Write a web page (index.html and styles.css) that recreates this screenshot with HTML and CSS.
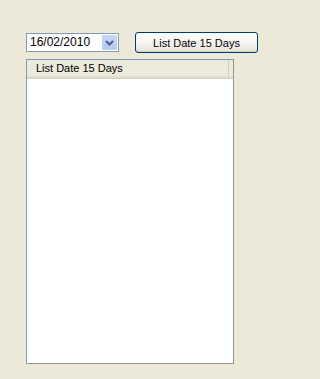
FILE: index.html
```html
<!DOCTYPE html>
<html>
<head>
<meta charset="utf-8">
<link rel="stylesheet" href="styles.css">
</head>
<body>
<div class="page">
  <div class="toolbar">
    <div class="combo">
      <span class="combo-text">16/02/2010</span>
      <span class="combo-btn">
        <svg width="9" height="6" viewBox="0 0 9 6"><path d="M1 1 L4.5 4.5 L8 1" fill="none" stroke="#4d6185" stroke-width="2"/></svg>
      </span>
    </div>
    <button class="btn">List Date 15 Days</button>
  </div>
  <div class="listview">
    <div class="header">
      <div class="col">List Date 15 Days</div>
      <div class="col-rest"></div>
    </div>
  </div>
</div>
</body>
</html>
```
FILE: styles.css
```css
html, body {
  margin: 0;
  padding: 0;
  background: #ece9d8;
}
.page {
  width: 264px;
  height: 379px;
  padding: 32px 0 0 26px;
  box-sizing: border-box;
  font-family: "Liberation Sans", Arial, sans-serif;
  font-size: 11px;
  color: #000;
}
.toolbar {
  display: flex;
  align-items: flex-start;
  gap: 16px;
}
.combo {
  width: 93px;
  height: 19px;
  box-sizing: border-box;
  border: 1px solid #7f9db9;
  background: #fff;
  display: flex;
  align-items: center;
  margin-top: 1px;
}
.combo-text {
  flex: 1;
  padding-left: 3px;
  line-height: 17px;
  font-size: 12px;
}
.combo-btn {
  width: 15px;
  height: 15px;
  margin-right: 1px;
  background: linear-gradient(#c6d5fc, #b4c7f6);
  border: 1px solid #c5d3f7;
  box-sizing: border-box;
  border-radius: 1px;
  display: flex;
  align-items: center;
  justify-content: center;
}
.btn {
  width: 123px;
  height: 21px;
  border: 1px solid #003c74;
  border-radius: 3px;
  background: linear-gradient(#ffffff 0%, #f4f3ee 60%, #e3e1d5 100%);
  font-family: "Liberation Sans", Arial, sans-serif;
  font-size: 11px;
  color: #000;
  padding: 0;
  box-shadow: inset 0 -1px 0 #d6d0c5;
}
.listview {
  margin-top: 6px;
  width: 208px;
  height: 305px;
  box-sizing: border-box;
  border: 1px solid #7f9db9;
  border-bottom-color: #8e9498;
  border-right-color: #8e9498;
  background: #fff;
}
.header {
  display: flex;
  height: 18px;
  background: #ebeadb;
  border-bottom: 1px solid #d6d2c2;
  box-shadow: inset 0 -2px 0 #e2decd;
}
.col {
  width: 202px;
  box-sizing: border-box;
  padding-left: 9px;
  line-height: 17px;
  border-right: 1px solid #d0cdc0;
}
.col-rest {
  flex: 1;
}
```
